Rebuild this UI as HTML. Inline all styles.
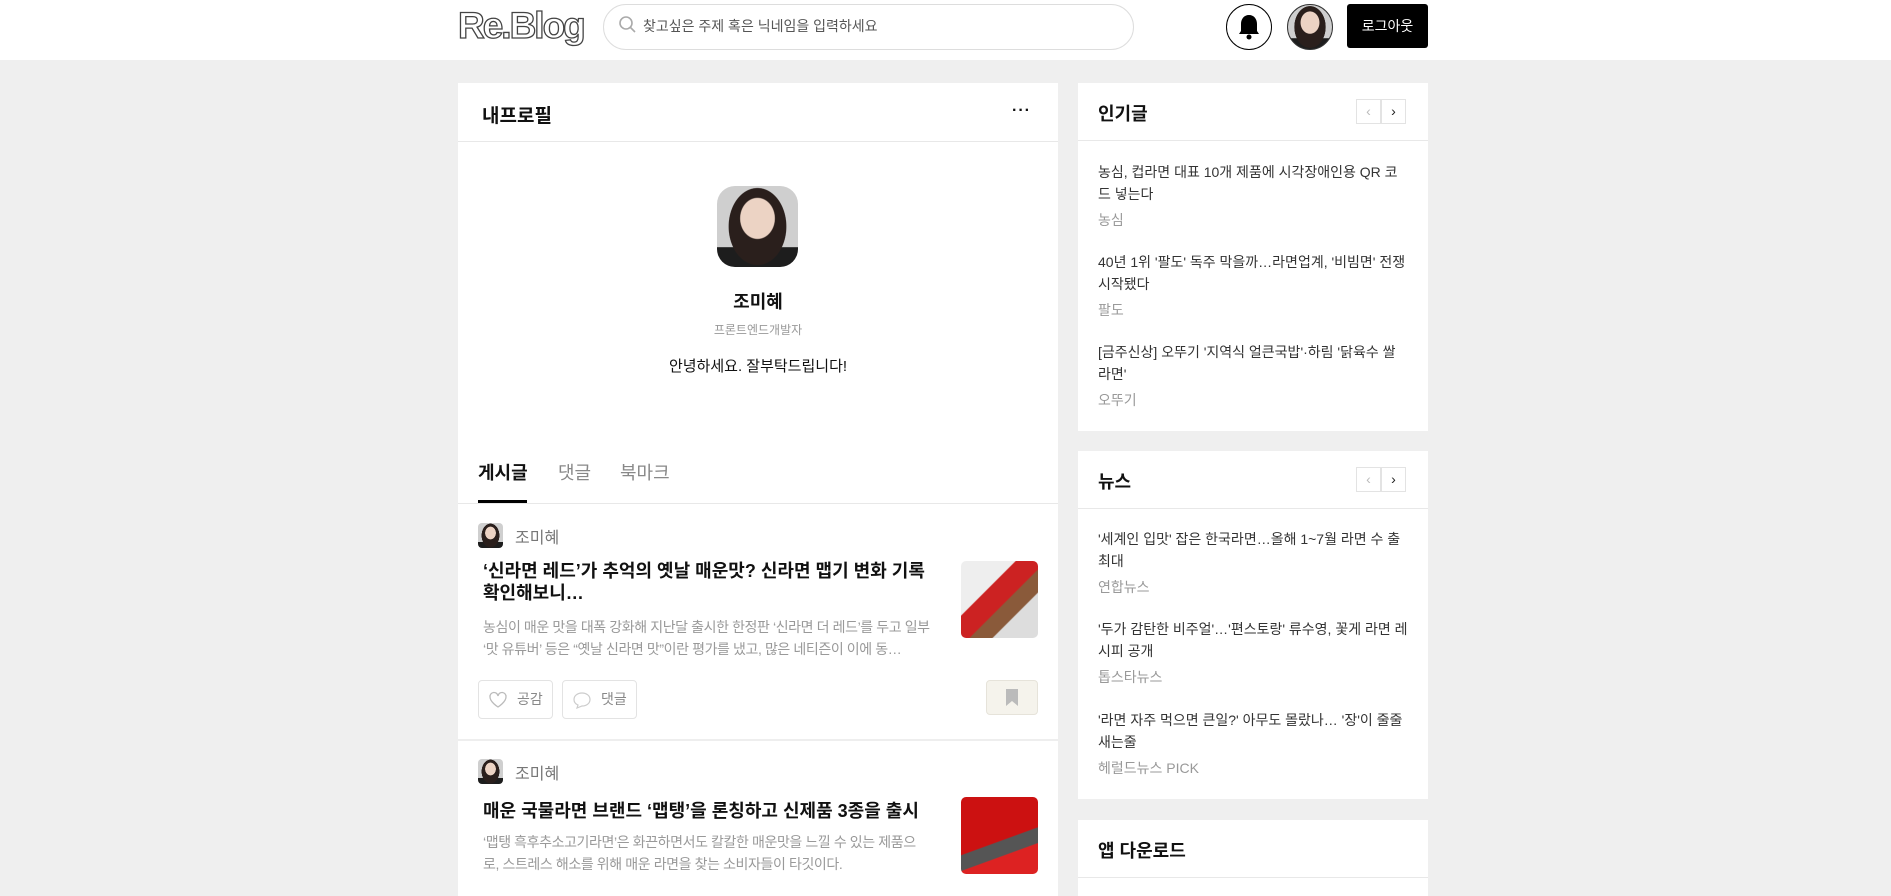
<!DOCTYPE html>
<html><head><meta charset="utf-8"><style>
*{margin:0;padding:0;box-sizing:border-box}
body{width:1891px;height:896px;background:#efefef;font-family:"Liberation Sans","Noto Sans CJK KR",sans-serif;position:relative;overflow:hidden;color:#111}
.a{position:absolute;white-space:nowrap}
.card{position:absolute;background:#fff}
.hl{position:absolute;left:0;right:0;height:1px;background:#e8e8e8}
.ph{background:radial-gradient(ellipse 22% 26% at 50% 40%,#ecd3c4 0 95%,transparent 100%),radial-gradient(ellipse 36% 48% at 50% 50%,#2a1f1c 0 98%,transparent 100%),linear-gradient(#cfcfcf 0 75%,#1d1d1d 76%);}
.nav{position:absolute;width:25px;height:25px;border:1px solid #e3e3e3;font-size:14px;text-align:center;line-height:22px;color:#222}
.rt{font-size:14px;color:#333;line-height:22px;white-space:normal;width:310px}
.src{font-size:14px;color:#999}
</style></head><body>
<div class="a" style="left:0;top:0;width:1891px;height:60px;background:#fff"></div>
<div class="a" style="left:458px;top:5px;font-size:37px;font-weight:bold;color:#fff;-webkit-text-stroke:1.3px #444;letter-spacing:-2px">Re.Blog</div>
<div class="a" style="left:603px;top:4px;width:531px;height:46px;border:1px solid #ddd;border-radius:23px;background:#fff"></div>
<svg class="a" style="left:618px;top:15px" width="20" height="20" viewBox="0 0 20 20"><circle cx="8" cy="8" r="6" fill="none" stroke="#aaa" stroke-width="1.6"/><path d="M12.5 12.5L17 17" stroke="#aaa" stroke-width="1.6"/></svg>
<div class="a" style="left:643px;top:16px;font-size:14px;color:#555">찾고싶은 주제 혹은 닉네임을 입력하세요</div>
<div class="a" style="left:1226px;top:4px;width:46px;height:46px;border:1.5px solid #000;border-radius:50%"></div>
<svg class="a" style="left:1234px;top:12px" width="30" height="30" viewBox="0 0 30 30"><path d="M15 3c-5 0-8 4-8 9v7l-2 3h20l-2-3v-7c0-5-3-9-8-9z" fill="#000"/><circle cx="15" cy="25" r="2.5" fill="#000"/></svg>
<div class="a ph" style="left:1287px;top:4px;width:46px;height:46px;border:1.5px solid #333;border-radius:50%"></div>
<div class="a" style="left:1347px;top:4px;width:81px;height:44px;background:#000;border-radius:3px;color:#fff;font-size:14px;text-align:center;line-height:44px">로그아웃</div>

<div class="card" style="left:458px;top:83px;width:600px;height:813px">
<div class="a" style="left:24px;top:18px;font-size:19px;font-weight:bold">내프로필</div>
<div class="a" style="left:554px;top:19px;font-size:16px;font-weight:bold;letter-spacing:1px">···</div>
<div class="hl" style="top:58px"></div>
<div class="a ph" style="left:259px;top:103px;width:81px;height:81px;border-radius:18px"></div>
<div class="a" style="left:0;width:600px;top:205px;text-align:center;font-size:18px;font-weight:bold">조미혜</div>
<div class="a" style="left:0;width:600px;top:238px;text-align:center;font-size:12px;color:#999">프론트엔드개발자</div>
<div class="a" style="left:0;width:600px;top:272px;text-align:center;font-size:15px">안녕하세요.  잘부탁드립니다!</div>
<div class="a" style="left:20px;top:376px;font-size:18px;font-weight:bold">게시글</div>
<div class="a" style="left:100px;top:376px;font-size:18px;color:#888">댓글</div>
<div class="a" style="left:162px;top:376px;font-size:18px;color:#888">북마크</div>
<div class="a" style="left:20px;top:417px;width:49px;height:3px;background:#000"></div>
<div class="hl" style="top:420px"></div>

<div class="a ph" style="left:20px;top:440px;width:25px;height:25px;border-radius:4px"></div>
<div class="a" style="left:57px;top:441px;font-size:16px;color:#777">조미혜</div>
<div class="a" style="left:25px;top:477px;font-size:18px;font-weight:bold;line-height:22px;white-space:normal;width:445px">‘신라면 레드’가 추억의 옛날 매운맛? 신라면 맵기 변화 기록 확인해보니…</div>
<div class="a" style="left:25px;top:533px;font-size:14px;color:#999;line-height:22px;white-space:normal;width:448px;letter-spacing:-0.4px;height:44px;overflow:hidden">농심이 매운 맛을 대폭 강화해 지난달 출시한 한정판 ‘신라면 더 레드’를 두고 일부 ‘맛 유튜버’ 등은 “옛날 신라면 맛”이란 평가를 냈고, 많은 네티즌이 이에 동…</div>
<div class="a" style="left:503px;top:478px;width:77px;height:77px;border-radius:5px;background:linear-gradient(135deg,#eee 0 35%,#c22 36% 55%,#8a5a3a 56% 70%,#ddd 71%)"></div>
<div class="a" style="left:20px;top:597px;width:75px;height:39px;border:1px solid #e3e3e3;border-radius:4px;font-size:14px;color:#888;line-height:37px;padding-left:38px">공감</div>
<svg class="a" style="left:30px;top:608px" width="20" height="18" viewBox="0 0 20 18"><path d="M10 16S2 11 2 6a4 4 0 0 1 8-1 4 4 0 0 1 8 1c0 5-8 10-8 10z" fill="none" stroke="#bbb" stroke-width="1.3"/></svg>
<div class="a" style="left:104px;top:597px;width:75px;height:39px;border:1px solid #e3e3e3;border-radius:4px;font-size:14px;color:#888;line-height:37px;padding-left:38px">댓글</div>
<svg class="a" style="left:114px;top:608px" width="20" height="18" viewBox="0 0 20 18"><path d="M10 2c4.5 0 8 2.7 8 6.5S14.5 15 10 15l-5 2 1-3C3.5 13 2 11 2 8.5 2 4.7 5.5 2 10 2z" fill="none" stroke="#ccc" stroke-width="1.2"/></svg>
<div class="a" style="left:528px;top:597px;width:52px;height:35px;border:1px solid #e6e3da;border-radius:4px;background:#f5f3ec"></div>
<svg class="a" style="left:547px;top:606px" width="14" height="17" viewBox="0 0 14 17"><path d="M1 0h12v17l-6-5-6 5z" fill="#bbb"/></svg>
<div class="hl" style="top:656px;background:#eee;height:2px"></div>

<div class="a ph" style="left:20px;top:676px;width:25px;height:25px;border-radius:4px"></div>
<div class="a" style="left:57px;top:677px;font-size:16px;color:#777">조미혜</div>
<div class="a" style="left:25px;top:714px;font-size:18px;font-weight:bold">매운 국물라면 브랜드 ‘맵탱’을 론칭하고 신제품 3종을 출시</div>
<div class="a" style="left:25px;top:748px;font-size:14px;color:#999;line-height:22px;white-space:normal;width:448px;letter-spacing:-0.4px">‘맵탱 흑후추소고기라면’은 화끈하면서도 칼칼한 매운맛을 느낄 수 있는 제품으로, 스트레스 해소를 위해 매운 라면을 찾는 소비자들이 타깃이다.</div>
<div class="a" style="left:503px;top:714px;width:77px;height:77px;border-radius:5px;background:linear-gradient(160deg,#c11 0 55%,#555 56% 70%,#d22 71%)"></div>
</div>

<div class="card" style="left:1078px;top:83px;width:350px;height:348px">
<div class="a" style="left:20px;top:17px;font-size:18px;font-weight:bold">인기글</div>
<div class="nav" style="left:278px;top:16px;color:#bbb">‹</div><div class="nav" style="left:303px;top:16px">›</div>
<div class="hl" style="top:57px"></div>
<div class="a rt" style="left:20px;top:78px">농심, 컵라면 대표 10개 제품에 시각장애인용 QR 코드 넣는다</div>
<div class="a src" style="left:20px;top:127px">농심</div>
<div class="a rt" style="left:20px;top:168px">40년 1위 '팔도' 독주 막을까…라면업계, '비빔면' 전쟁 시작됐다</div>
<div class="a src" style="left:20px;top:217px">팔도</div>
<div class="a rt" style="left:20px;top:258px">[금주신상] 오뚜기 '지역식 얼큰국밥'·하림 '닭육수 쌀라면'</div>
<div class="a src" style="left:20px;top:307px">오뚜기</div>
</div>

<div class="card" style="left:1078px;top:451px;width:350px;height:348px">
<div class="a" style="left:20px;top:17px;font-size:18px;font-weight:bold">뉴스</div>
<div class="nav" style="left:278px;top:16px;color:#bbb">‹</div><div class="nav" style="left:303px;top:16px">›</div>
<div class="hl" style="top:57px"></div>
<div class="a rt" style="left:20px;top:77px">'세계인 입맛' 잡은 한국라면…올해 1~7월 라면 수 출 최대</div>
<div class="a src" style="left:20px;top:126px">연합뉴스</div>
<div class="a rt" style="left:20px;top:167px">'두가 감탄한 비주얼'…'편스토랑' 류수영, 꽃게 라면 레시피 공개</div>
<div class="a src" style="left:20px;top:216px">톱스타뉴스</div>
<div class="a rt" style="left:20px;top:258px">'라면 자주 먹으면 큰일?' 아무도 몰랐나… '장'이 줄줄 새는줄</div>
<div class="a src" style="left:20px;top:307px">헤럴드뉴스 PICK</div>
</div>

<div class="card" style="left:1078px;top:820px;width:350px;height:76px">
<div class="a" style="left:20px;top:17px;font-size:18px;font-weight:bold">앱 다운로드</div>
<div class="hl" style="top:57px"></div>
</div>
</body></html>
